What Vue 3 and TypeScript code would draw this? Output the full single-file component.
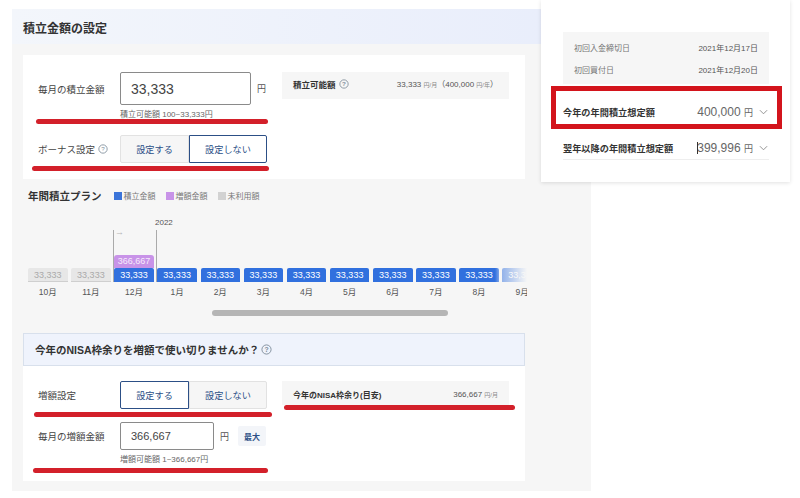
<script setup lang="ts">
interface PlanMonth {
  label: string
  kind: 'unused' | 'normal'
  extra?: string
}

const months: PlanMonth[] = [
  { label: '10月', kind: 'unused' },
  { label: '11月', kind: 'unused' },
  { label: '12月', kind: 'normal', extra: '366,667' },
  { label: '1月', kind: 'normal' },
  { label: '2月', kind: 'normal' },
  { label: '3月', kind: 'normal' },
  { label: '4月', kind: 'normal' },
  { label: '5月', kind: 'normal' },
  { label: '6月', kind: 'normal' },
  { label: '7月', kind: 'normal' },
  { label: '8月', kind: 'normal' },
  { label: '9月', kind: 'normal' }
]

const legend = [
  { label: '積立金額', color: '#3b74d9' },
  { label: '増額金額', color: '#c893e8' },
  { label: '未利用額', color: '#d2d2d2' }
]

// 赤いマーカー線
const marks = [
  { left: 36, top: 119, width: 232 },
  { left: 32, top: 166, width: 237 },
  { left: 34, top: 412, width: 238 },
  { left: 284, top: 405, width: 231 },
  { left: 33, top: 468, width: 235 }
]
</script>

<template>
  <div class="page">
    <main class="panel">
      <header class="panel-head">積立金額の設定</header>

      <section class="card card-top">
        <div class="col-left">
          <div class="row">
            <span class="label">毎月の積立金額</span>
            <input class="amount amount-lg" value="33,333" />
            <span class="yen">円</span>
          </div>
          <p class="hint">積立可能額 100~33,333円</p>
          <div class="row row-bonus">
            <span class="label label-bonus">
              ボーナス設定
              <svg class="help" viewBox="0 0 12 12"><circle cx="6" cy="6" r="5" /><text x="6" y="8.6">?</text></svg>
            </span>
            <div class="toggle">
              <button class="opt opt-a">設定する</button>
              <button class="opt opt-b active">設定しない</button>
            </div>
          </div>
        </div>
        <div class="info">
          <b class="info-title">
            積立可能額
            <svg class="help" viewBox="0 0 12 12"><circle cx="6" cy="6" r="5" /><text x="6" y="8.6">?</text></svg>
          </b>
          <span class="info-val">33,333 <small>円/月</small>（400,000 <small>円/年</small>）</span>
        </div>
      </section>

      <section class="plan">
        <div class="plan-head">
          <h2>年間積立プラン</h2>
          <span v-for="item in legend" :key="item.label" class="legend">
            <i :style="{ background: item.color }"></i>{{ item.label }}
          </span>
        </div>
        <div class="chart">
          <div class="year-mark"><span class="year">2022</span><span class="arrow">→</span></div>
          <div v-for="m in months" :key="m.label" class="month">
            <div class="stack">
              <div v-if="m.extra" class="bar bar-extra">{{ m.extra }}</div>
              <div class="bar" :class="m.kind === 'unused' ? 'bar-unused' : 'bar-normal'">33,333</div>
            </div>
            <div class="month-name">{{ m.label }}</div>
          </div>
          <div class="fade"></div>
        </div>
        <div class="scroll"><div class="thumb"></div></div>
      </section>

      <header class="nisa-head">
        今年のNISA枠余りを増額で使い切りませんか？
        <svg class="help help-lg" viewBox="0 0 12 12"><circle cx="6" cy="6" r="5" /><text x="6" y="8.6">?</text></svg>
      </header>

      <section class="card card-nisa">
        <div class="col-left">
          <div class="row">
            <span class="label">増額設定</span>
            <div class="toggle">
              <button class="opt opt-a active">設定する</button>
              <button class="opt opt-b">設定しない</button>
            </div>
          </div>
          <div class="row row-extra">
            <span class="label">毎月の増額金額</span>
            <input class="amount amount-sm" value="366,667" />
            <span class="yen">円</span>
            <button class="max">最大</button>
          </div>
          <p class="hint">増額可能額 1~366,667円</p>
        </div>
        <div class="info info-nisa">
          <b class="info-title">今年のNISA枠余り(目安)</b>
          <span class="info-val">366,667 <small>円/月</small></span>
        </div>
      </section>
    </main>

    <aside class="popup">
      <dl class="dates">
        <div><dt>初回入金締切日</dt><dd>2021年12月17日</dd></div>
        <div><dt>初回買付日</dt><dd>2021年12月20日</dd></div>
      </dl>
      <div class="total">
        <b>今年の年間積立想定額</b>
        <span class="total-val">400,000 <small>円</small></span>
        <svg class="chev" viewBox="0 0 10 6"><polyline points="1,1 5,5 9,1" /></svg>
      </div>
      <div class="total total-next">
        <b>翌年以降の年間積立想定額</b>
        <span class="total-val"><i class="caret"></i>399,996 <small>円</small></span>
        <svg class="chev" viewBox="0 0 10 6"><polyline points="1,1 5,5 9,1" /></svg>
      </div>
    </aside>

    <div class="red-box"></div>
    <div
      v-for="(mark, i) in marks"
      :key="i"
      class="red-line"
      :style="{ left: mark.left + 'px', top: mark.top + 'px', width: mark.width + 'px' }"
    ></div>
  </div>
</template>

<style scoped>
.page {
  position: relative;
  width: 800px;
  height: 498px;
  overflow: hidden;
  box-sizing: border-box;
  padding: 9px 0 0 12px;
  background: #fff;
  color: #333;
  font-family: "Liberation Sans", "Noto Sans CJK JP", sans-serif;
}

.panel {
  width: 579px;
  height: 482px;
  background: #f6f6f6;
}

.panel-head {
  height: 35px;
  box-sizing: border-box;
  padding: 12px 0 0 11px;
  background: linear-gradient(90deg, #f3f6fb, #e8edfb);
  font-size: 12px;
  font-weight: 700;
  line-height: 16px;
}

.card {
  display: flex;
  justify-content: space-between;
  width: 502px;
  margin-left: 11px;
  box-sizing: border-box;
  background: #fff;
}

.card-top {
  height: 124px;
  margin-top: 11px;
  padding: 17px 16px 0 15px;
}

.card-nisa {
  height: 115px;
  padding: 15px 16px 0 15px;
}

.row {
  display: flex;
  align-items: center;
}

.label {
  width: 82px;
  flex: none;
  font-size: 9.5px;
  color: #444;
}

.label-bonus {
  display: flex;
  align-items: center;
  gap: 3px;
  white-space: nowrap;
}

.amount {
  box-sizing: border-box;
  padding: 0 0 0 10px;
  border: 1px solid #8a8a8a;
  border-radius: 2px;
  background: #fff;
  color: #444;
  font-family: inherit;
}

.amount-lg {
  width: 131px;
  height: 33px;
  font-size: 14px;
}

.amount-sm {
  width: 94px;
  height: 28px;
  font-size: 11px;
}

.yen {
  margin-left: 6px;
  font-size: 9px;
  color: #555;
}

.hint {
  margin: 3px 0 0 82px;
  font-size: 8px;
  line-height: 14px;
  color: #666;
}

.row-bonus {
  margin-top: 13px;
}

.row-extra {
  margin-top: 13px;
}

.toggle {
  display: flex;
  width: 147px;
  height: 28px;
}

.opt {
  padding: 0;
  border: 1px solid #e2e2e2;
  background: #f6f6f6;
  color: #2c4f86;
  font-family: inherit;
  font-size: 9.2px;
}

.opt-a {
  width: 69px;
  border-radius: 2px 0 0 2px;
}

.opt-b {
  width: 78px;
  border-radius: 0 2px 2px 0;
}

.opt.active {
  border-color: #2c4f86;
  background: #fff;
}

.max {
  width: 28px;
  height: 20px;
  margin-left: 9px;
  padding: 0;
  border: 0;
  border-radius: 2px;
  background: #f3f5f9;
  color: #2c4f86;
  font-family: inherit;
  font-size: 8px;
  font-weight: 700;
}

.help {
  width: 10px;
  height: 10px;
  flex: none;
  fill: none;
  stroke: #7d8b99;
  stroke-width: 1;
}

.help-lg {
  width: 11px;
  height: 11px;
  margin-left: 2px;
}

.help text {
  fill: #7d8b99;
  stroke: none;
  font-size: 7.5px;
  text-anchor: middle;
}

.info {
  display: flex;
  justify-content: space-between;
  align-items: center;
  width: 227px;
  height: 27px;
  box-sizing: border-box;
  padding: 0 11px 4px;
  background: #f6f6f6;
}

.info-nisa {
  height: 24px;
  padding: 3px 11px 0;
}

.info-nisa .info-title {
  font-size: 8px;
}

.info-title {
  display: flex;
  align-items: center;
  gap: 3px;
  font-size: 8.5px;
}

.info-val {
  font-size: 8px;
  color: #555;
}

.info-val small {
  font-size: 6px;
  color: #888;
}

.plan {
  position: relative;
  height: 154px;
  padding-left: 16px;
}

.plan-head {
  display: flex;
  align-items: center;
  height: 34px;
  box-sizing: border-box;
  padding-bottom: 1px;
}

.plan-head h2 {
  margin: 0 12px 0 0;
  font-size: 10.5px;
  font-weight: 700;
}

.legend {
  display: flex;
  align-items: center;
  gap: 2px;
  margin-right: 10px;
  font-size: 8px;
  color: #777;
}

.legend i {
  width: 8px;
  height: 8px;
}

.chart {
  position: relative;
  display: flex;
  height: 87px;
  width: 499px;
  overflow: hidden;
}

.month {
  flex: none;
  display: flex;
  flex-direction: column;
  justify-content: flex-end;
  width: 43.14px;
}

.stack {
  width: 39.5px;
  margin-top: auto;
}

.bar {
  height: 14px;
  border-radius: 2px 2px 0 0;
  text-align: center;
  font-size: 9px;
  line-height: 14px;
}

.bar-normal {
  background: #3170de;
  color: #fff;
}

.bar-unused {
  background: #e7e7e7;
  color: #aaa;
  border-bottom: 1px solid #cfcfcf;
  box-sizing: border-box;
}

.bar-extra {
  height: 13px;
  background: #c893e8;
  color: #f6ecfb;
  line-height: 13px;
  border-radius: 3px 3px 0 0;
}

.month-name {
  height: 18px;
  font-size: 8.5px;
  line-height: 20px;
  text-align: center;
  color: #555;
  width: 39.5px;
}

.year-mark {
  position: absolute;
  left: 85px;
  top: 17px;
  width: 44px;
  height: 52px;
  box-sizing: border-box;
  border-left: 1px solid #aaa;
  border-right: 1px solid #aaa;
}

.year {
  position: absolute;
  left: 100%;
  top: -12px;
  margin-left: -1px;
  font-size: 8px;
  color: #555;
}

.arrow {
  position: absolute;
  left: 1px;
  top: -3px;
  font-size: 9px;
  color: #b5b5b5;
}

.fade {
  position: absolute;
  right: 0;
  bottom: 18px;
  width: 32px;
  height: 15px;
  background: linear-gradient(90deg, rgba(246, 246, 246, 0) 0%, rgba(246, 246, 246, 0.45) 15%, #f6f6f6 100%);
}

.scroll {
  width: 500px;
  height: 6px;
  margin-top: 10px;
}

.thumb {
  width: 236px;
  height: 6px;
  margin-left: 184px;
  border-radius: 3px;
  background: #b5b5b5;
}

.nisa-head {
  display: flex;
  align-items: center;
  width: 502px;
  height: 33px;
  margin-left: 11px;
  box-sizing: border-box;
  padding-left: 11px;
  border: 1px solid #d8e0ec;
  background: #eff3fc;
  font-size: 10.5px;
  font-weight: 700;
}

.popup {
  position: absolute;
  left: 541px;
  top: 0;
  width: 249px;
  height: 182px;
  box-sizing: border-box;
  padding: 32px 21px 0 22px;
  background: #fff;
  box-shadow: 0 1px 4px rgba(0, 0, 0, 0.12);
}

.dates {
  margin: 0;
  padding: 6px 11px 0;
  height: 46px;
  background: #f6f6f6;
  font-size: 8px;
  color: #666;
}

.dates div {
  display: flex;
  justify-content: space-between;
  height: 22px;
  line-height: 22px;
}

.dates dt {
  color: #777;
}

.dates dd {
  margin: 0;
  color: #555;
}

.total {
  display: flex;
  align-items: center;
  height: 37px;
  margin-top: 9px;
  font-size: 9.2px;
}

.total-next {
  box-sizing: border-box;
  height: 30px;
  margin-top: 0;
  padding-top: 6px;
  border-bottom: 1px solid #eee;
}

.total b {
  flex: 1;
  white-space: nowrap;
  font-weight: 700;
  color: #333;
}

.total-val {
  position: relative;
  font-size: 12px;
  color: #666;
}

.total-val small {
  font-size: 9px;
}

.caret {
  position: absolute;
  left: 0;
  top: 1px;
  width: 1px;
  height: 12px;
  background: #333;
}

.chev {
  width: 9px;
  height: 6px;
  margin: 0 1px 0 6px;
  fill: none;
  stroke: #888;
  stroke-width: 1;
}

.red-box {
  position: absolute;
  left: 551px;
  top: 86px;
  width: 231px;
  height: 43px;
  box-sizing: border-box;
  border: 5px solid #d3141c;
}

.red-line {
  position: absolute;
  height: 5px;
  border-radius: 3px;
  background: #d3202a;
}
</style>
